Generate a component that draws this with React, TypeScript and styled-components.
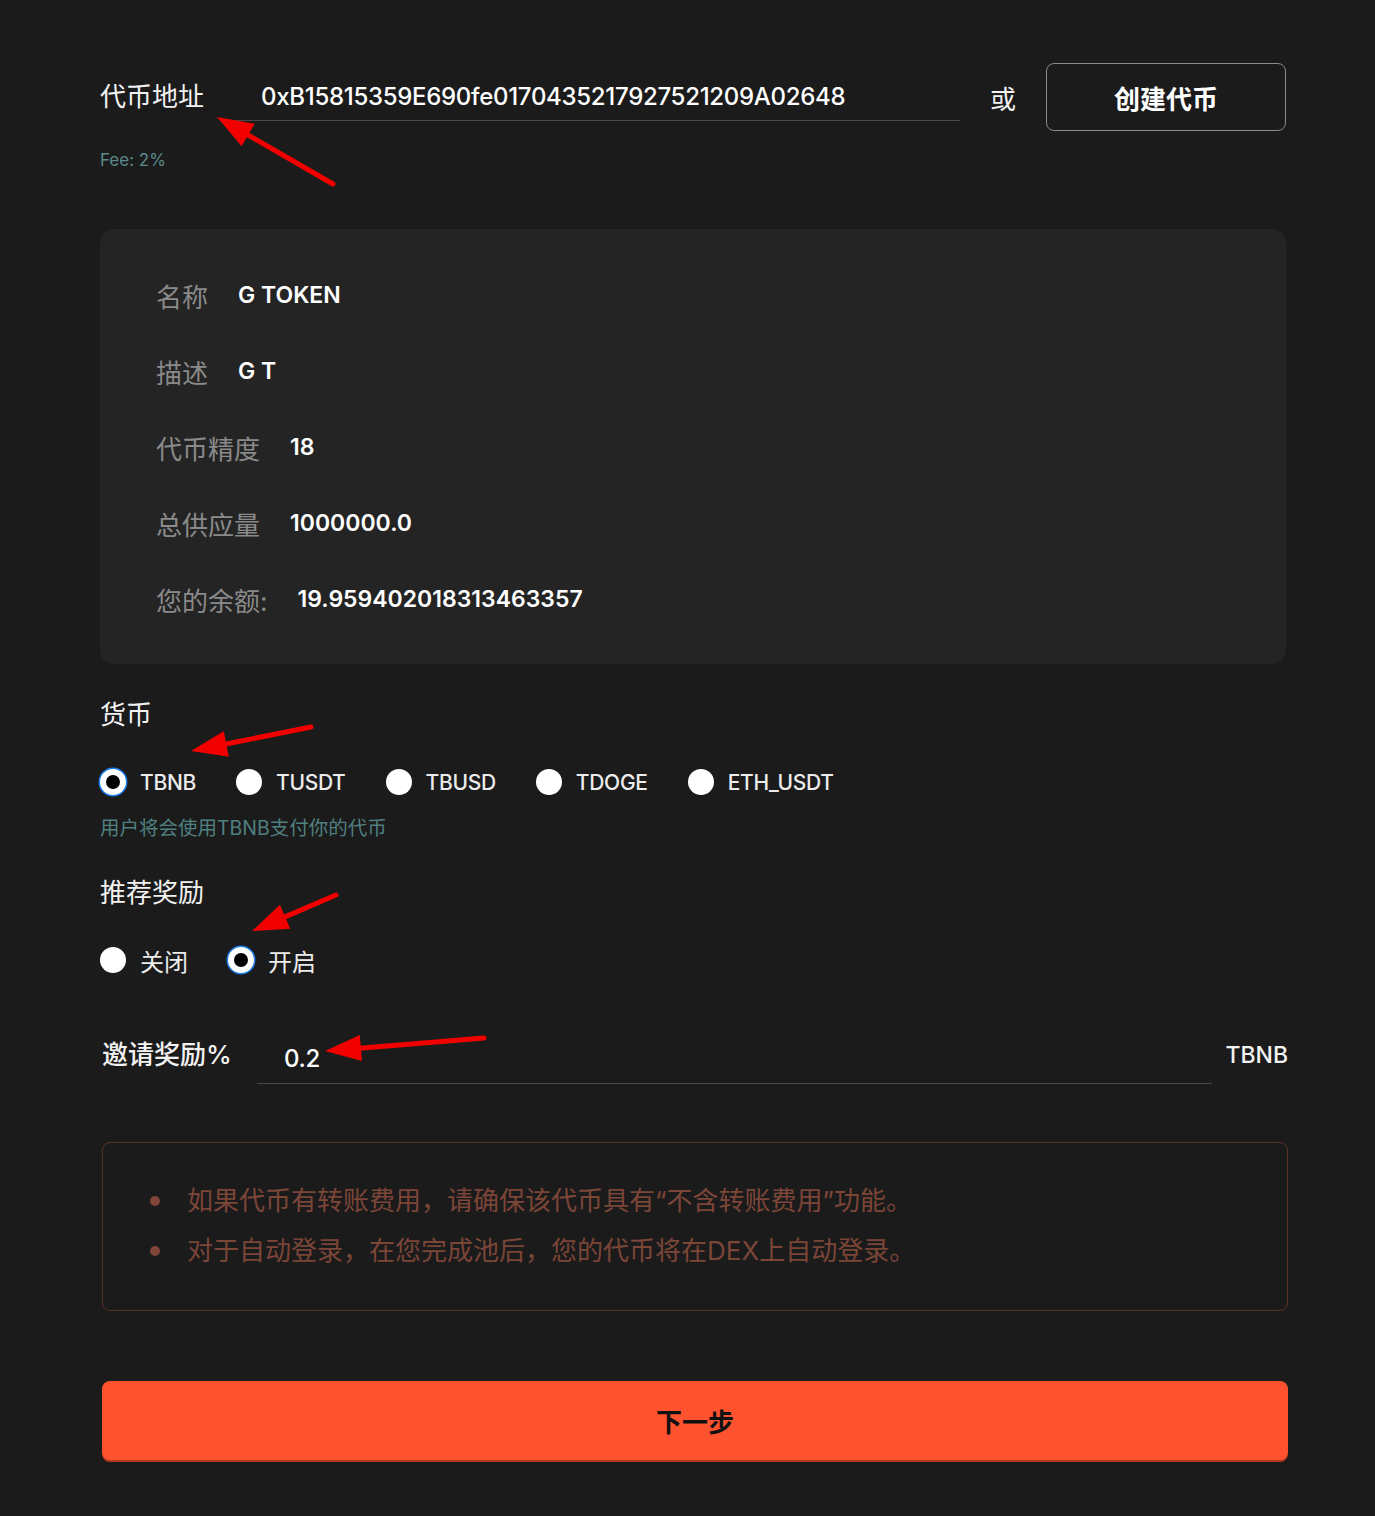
import React from "react";
import styled, { createGlobalStyle } from "styled-components";

const Global = createGlobalStyle`
  html, body { margin: 0; padding: 0; background: #1b1b1b; }
  body { font-family: "Inter", "Noto Sans CJK SC", sans-serif; color: #fff; }
  * { box-sizing: border-box; }
`;

const Page = styled.div`
  position: relative;
  width: 1375px;
  min-height: 1516px;
  padding: 63px 0 56px 100px;
`;

const Content = styled.div`
  width: 1186px;
  display: flex;
  flex-direction: column;
`;

const TopRow = styled.div`
  display: flex;
  align-items: center;
  height: 68px;
`;

const TopLabel = styled.div`
  font-size: 26px;
  line-height: 36px;
  color: #f2f2f2;
  white-space: nowrap;
`;

const UnderlineField = styled.div<{ $h: number; $pad: number; $ml: number }>`
  flex: 1;
  margin-left: ${(p) => p.$ml}px;
  height: ${(p) => p.$h}px;
  display: flex;
  align-items: center;
  padding-left: ${(p) => p.$pad}px;
  border-bottom: 1px solid #4a4a4a;
  font-size: 24px;
  font-weight: 500;
  color: #fff;
  letter-spacing: -0.3px;
`;

const Or = styled.div`
  margin-left: 30px;
  font-size: 26px;
  color: #f2f2f2;
`;

const OutlineButton = styled.button`
  margin-left: 30px;
  width: 240px;
  height: 68px;
  border: 1px solid #8a8a8a;
  border-radius: 8px;
  background: transparent;
  color: #fff;
  font-family: "Noto Sans CJK SC", sans-serif;
  font-size: 26px;
  font-weight: 700;
`;

const Fee = styled.div`
  margin-top: 19px;
  font-size: 17px;
  line-height: 20px;
  color: #5b8a8a;
`;

const Card = styled.div`
  margin-top: 59px;
  background: #242424;
  border-radius: 14px;
  padding: 28px 56px 27px;
`;

const InfoRow = styled.div`
  height: 76px;
  display: flex;
  align-items: center;
  gap: 30px;
`;

const InfoLabel = styled.span`
  font-size: 26px;
  color: #8a8a8a;
`;

const InfoValue = styled.span`
  font-size: 23px;
  font-weight: 600;
  color: #fff;
`;

const SectionTitle = styled.div<{ $mt: number }>`
  margin-top: ${(p) => p.$mt}px;
  font-size: 26px;
  line-height: 36px;
  color: #f2f2f2;
`;

const RadioGroup = styled.div`
  margin-top: 34px;
  height: 30px;
  display: flex;
  align-items: center;
  gap: 40px;
`;

const RadioItem = styled.label`
  display: flex;
  align-items: center;
  gap: 14px;
`;

const RadioDot = styled.span<{ $on: boolean }>`
  width: 26px;
  height: 26px;
  border-radius: 50%;
  background: ${(p) => (p.$on ? "#000" : "#fff")};
  border: ${(p) => (p.$on ? "6px solid #fff" : "none")};
  box-shadow: ${(p) => (p.$on ? "0 0 0 1.5px #1a7ae8" : "none")};
`;

const RadioText = styled.span<{ $cjk?: boolean }>`
  font-size: ${(p) => (p.$cjk ? "24px" : "21px")};
  font-weight: ${(p) => (p.$cjk ? 400 : 500)};
  letter-spacing: ${(p) => (p.$cjk ? "0" : "-0.3px")};
  color: #ececec;
`;

const Helper = styled.div`
  margin-top: 19px;
  font-size: 19.5px;
  line-height: 24px;
  color: #4f8080;
`;

const InviteRow = styled.div`
  margin-top: 59px;
  margin-left: 2px;
  margin-right: -2px;
  height: 50px;
  display: flex;
  align-items: center;
`;

const InviteLabel = styled.div`
  width: 124px;
  padding-bottom: 8px;
  font-size: 26px;
  line-height: 36px;
  font-weight: 500;
  color: #f2f2f2;
  white-space: nowrap;
`;

const Unit = styled.div`
  margin-left: 13px;
  padding-bottom: 8px;
  font-size: 23px;
  font-weight: 500;
  line-height: 36px;
  color: #f2f2f2;
`;

const Warning = styled.ul`
  margin: 58px -2px 0 2px;
  list-style: none;
  border: 1px solid #5a3128;
  border-radius: 8px;
  padding: 33px 20px 34px 84px;
`;

const WarningItem = styled.li`
  position: relative;
  font-size: 26px;
  line-height: 50px;
  color: #7b4538;
  &::before {
    content: "";
    position: absolute;
    left: -37px;
    top: 20px;
    width: 10px;
    height: 10px;
    border-radius: 50%;
    background: #7f4536;
  }
`;

const NextButton = styled.button`
  margin: 70px -2px 0 2px;
  height: 79px;
  border: none;
  border-radius: 8px;
  background: #fe532e;
  box-shadow: 0 2px 0 #b3391f;
  color: #111;
  font-family: "Noto Sans CJK SC", sans-serif;
  font-size: 26px;
  font-weight: 700;
`;

const Overlay = styled.svg`
  position: absolute;
  top: 0;
  left: 0;
  pointer-events: none;
`;

type Arrow = { x1: number; y1: number; x2: number; y2: number };
const arrows: Arrow[] = [
  { x1: 333, y1: 184, x2: 217, y2: 117 },
  { x1: 311, y1: 727, x2: 191, y2: 751 },
  { x1: 336, y1: 895, x2: 252, y2: 931 },
  { x1: 484, y1: 1038, x2: 325, y2: 1051 },
];

function ArrowShape({ x1, y1, x2, y2 }: Arrow) {
  const dx = x2 - x1;
  const dy = y2 - y1;
  const len = Math.hypot(dx, dy);
  const ux = dx / len;
  const uy = dy / len;
  const L = 36;
  const W = 13;
  const bx = x2 - ux * L;
  const by = y2 - uy * L;
  const px = -uy;
  const py = ux;
  const pts = `${x2},${y2} ${bx + px * W},${by + py * W} ${bx - px * W},${by - py * W}`;
  return (
    <g>
      <line x1={x1} y1={y1} x2={bx + ux * 4} y2={by + uy * 4} stroke="#f20000" strokeWidth={5} strokeLinecap="round" />
      <polygon points={pts} fill="#f20000" />
    </g>
  );
}

const currencies = ["TBNB", "TUSDT", "TBUSD", "TDOGE", "ETH_USDT"];

export default function App() {
  return (
    <>
      <Global />
      <Page>
        <Content>
          <TopRow>
            <TopLabel>代币地址</TopLabel>
            <UnderlineField $h={48} $pad={30} $ml={27}>
              0xB15815359E690fe0170435217927521209A02648
            </UnderlineField>
            <Or>或</Or>
            <OutlineButton>创建代币</OutlineButton>
          </TopRow>
          <Fee>Fee: 2%</Fee>
          <Card>
            <InfoRow>
              <InfoLabel>名称</InfoLabel>
              <InfoValue>G TOKEN</InfoValue>
            </InfoRow>
            <InfoRow>
              <InfoLabel>描述</InfoLabel>
              <InfoValue>G T</InfoValue>
            </InfoRow>
            <InfoRow>
              <InfoLabel>代币精度</InfoLabel>
              <InfoValue>18</InfoValue>
            </InfoRow>
            <InfoRow>
              <InfoLabel>总供应量</InfoLabel>
              <InfoValue>1000000.0</InfoValue>
            </InfoRow>
            <InfoRow>
              <InfoLabel>您的余额:</InfoLabel>
              <InfoValue>19.959402018313463357</InfoValue>
            </InfoRow>
          </Card>
          <SectionTitle $mt={33}>货币</SectionTitle>
          <RadioGroup>
            {currencies.map((c, i) => (
              <RadioItem key={c}>
                <RadioDot $on={i === 0} />
                <RadioText>{c}</RadioText>
              </RadioItem>
            ))}
          </RadioGroup>
          <Helper>用户将会使用TBNB支付你的代币</Helper>
          <SectionTitle $mt={35}>推荐奖励</SectionTitle>
          <RadioGroup>
            <RadioItem>
              <RadioDot $on={false} />
              <RadioText $cjk>关闭</RadioText>
            </RadioItem>
            <RadioItem>
              <RadioDot $on={true} />
              <RadioText $cjk>开启</RadioText>
            </RadioItem>
          </RadioGroup>
          <InviteRow>
            <InviteLabel>邀请奖励%</InviteLabel>
            <UnderlineField $h={50} $pad={27} $ml={31}>
              0.2
            </UnderlineField>
            <Unit>TBNB</Unit>
          </InviteRow>
          <Warning>
            <WarningItem>如果代币有转账费用，请确保该代币具有“不含转账费用”功能。</WarningItem>
            <WarningItem>对于自动登录，在您完成池后，您的代币将在DEX上自动登录。</WarningItem>
          </Warning>
          <NextButton>下一步</NextButton>
        </Content>
        <Overlay width={1375} height={1516} viewBox="0 0 1375 1516">
          {arrows.map((a, i) => (
            <ArrowShape key={i} {...a} />
          ))}
        </Overlay>
      </Page>
    </>
  );
}
